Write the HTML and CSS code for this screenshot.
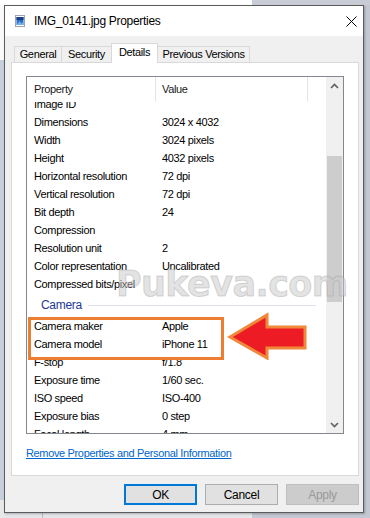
FILE: index.html
```html
<!DOCTYPE html>
<html>
<head>
<meta charset="utf-8">
<title>IMG_0141.jpg Properties</title>
<link rel="stylesheet" href="styles.css">
</head>
<body>
<div class="desktop">
  <div class="window">
    <div class="titlebar">
      <svg class="ticon" width="10" height="12" viewBox="0 0 10 12">
        <rect x="0.5" y="0.5" width="9" height="11" fill="#fff" stroke="#9aa4b4"/>
        <rect x="1.5" y="2" width="7" height="8" fill="#2b6cc4"/>
        <rect x="1.5" y="2" width="7" height="3" fill="#173f86"/>
        <path d="M1.5 10 L4.5 6 L6.5 8.5 L8.5 6.5 L8.5 10 Z" fill="#6fb0ec"/>
      </svg>
      <span class="title">IMG_0141.jpg Properties</span>
      <svg class="close" width="11" height="11" viewBox="0 0 11 11">
        <path d="M0.5 0.5 L10.5 10.5 M10.5 0.5 L0.5 10.5" stroke="#000" stroke-width="1" fill="none"/>
      </svg>
    </div>
    <div class="body">
      <div class="tabs">
        <div class="tab t-general">General</div>
        <div class="tab t-security">Security</div>
        <div class="tab t-details active">Details</div>
        <div class="tab t-prev">Previous Versions</div>
      </div>
      <div class="panel">
        <div class="list">
          <div class="list-main">
            <div class="header">
              <div class="hcell c1">Property</div>
              <div class="hcell c2">Value</div>
              <div class="hcell c3"></div>
            </div>
            <div class="viewport">
              <div class="rows">
                <div class="row"><span class="k">Image ID</span><span class="v"></span></div>
                <div class="row"><span class="k">Dimensions</span><span class="v">3024 x 4032</span></div>
                <div class="row"><span class="k">Width</span><span class="v">3024 pixels</span></div>
                <div class="row"><span class="k">Height</span><span class="v">4032 pixels</span></div>
                <div class="row"><span class="k">Horizontal resolution</span><span class="v">72 dpi</span></div>
                <div class="row"><span class="k">Vertical resolution</span><span class="v">72 dpi</span></div>
                <div class="row"><span class="k">Bit depth</span><span class="v">24</span></div>
                <div class="row"><span class="k">Compression</span><span class="v"></span></div>
                <div class="row"><span class="k">Resolution unit</span><span class="v">2</span></div>
                <div class="row"><span class="k">Color representation</span><span class="v">Uncalibrated</span></div>
                <div class="row"><span class="k">Compressed bits/pixel</span><span class="v"></span></div>
                <div class="group"><span class="gname">Camera</span><span class="gline"></span></div>
                <div class="hl">
                  <div class="row"><span class="k">Camera maker</span><span class="v">Apple</span></div>
                  <div class="row"><span class="k">Camera model</span><span class="v">iPhone 11</span></div>
                </div>
                <div class="row"><span class="k">F-stop</span><span class="v">f/1.8</span></div>
                <div class="row"><span class="k">Exposure time</span><span class="v">1/60 sec.</span></div>
                <div class="row"><span class="k">ISO speed</span><span class="v">ISO-400</span></div>
                <div class="row"><span class="k">Exposure bias</span><span class="v">0 step</span></div>
                <div class="row"><span class="k">Focal length</span><span class="v">4 mm</span></div>
              </div>
            </div>
          </div>
          <div class="scrollbar">
            <div class="sbtn">
              <svg width="9" height="6" viewBox="0 0 9 6"><polyline points="1,5 4.5,1.5 8,5" fill="none" stroke="#606060" stroke-width="1.6"/></svg>
            </div>
            <div class="track"><div class="thumb"></div></div>
            <div class="sbtn">
              <svg width="9" height="6" viewBox="0 0 9 6"><polyline points="1,1 4.5,4.5 8,1" fill="none" stroke="#606060" stroke-width="1.6"/></svg>
            </div>
          </div>
        </div>
        <a class="link" href="#">Remove Properties and Personal Information</a>
        <div class="watermark">Pukeva.com</div>
        <svg class="arrow" width="84" height="48" viewBox="0 0 84 48">
          <polygon points="4,25 41,3 41,15 79,15 79,36 41,36 41,46" fill="#ed1c24" stroke="#f0883a" stroke-width="3" stroke-linejoin="miter"/>
        </svg>
      </div>
      <div class="buttons">
        <button class="btn ok">OK</button>
        <button class="btn">Cancel</button>
        <button class="btn disabled">Apply</button>
      </div>
    </div>
  </div>
</div>
</body>
</html>
```
FILE: styles.css
```css
* { box-sizing: border-box; margin: 0; padding: 0; }
html, body { width: 370px; height: 518px; overflow: hidden; }
body {
  font-family: "Liberation Sans", Arial, sans-serif;
  font-size: 11px;
  letter-spacing: -0.35px;
  color: #000;
  background: #e4e6ea;
}
.desktop {
  width: 370px;
  height: 518px;
  padding: 5px 6px 5px 4px;
  background:
    linear-gradient(to right, transparent 0 42px, #b9bcc2 42px 43px, transparent 43px) 0 513px / 370px 5px no-repeat,
    linear-gradient(to bottom, #ffffff 0 5px, transparent 5px) 0 0 / 252px 518px no-repeat,
    linear-gradient(to bottom, #c8ccd5 0 5px, #c3c8d2 5px) 252px 0 / 118px 518px no-repeat,
    linear-gradient(to bottom, #fafafa 0 60px, #c7cfdc 60px 500px, #e8e8e8 500px) 0 0 / 4px 518px no-repeat,
    #e4e6ea;
}
.window {
  height: 508px;
  border: 1px solid #5c5c5c;
  background: #f0f0f0;
  display: flex;
  flex-direction: column;
  box-shadow: 1px 1px 2px rgba(0,0,0,0.25);
}
.titlebar {
  height: 30px;
  flex: 0 0 30px;
  background: #fff;
  display: flex;
  align-items: center;
  padding-left: 10px;
}
.ticon { flex: 0 0 auto; }
.title {
  margin-left: 9px;
  font-size: 12px;
  letter-spacing: -0.3px;
  color: #000;
}
.close { margin-left: auto; margin-right: 6px; }
.body {
  flex: 1;
  display: flex;
  flex-direction: column;
  padding: 7px 4px 0 6px;
}
.tabs {
  display: flex;
  align-items: flex-end;
  height: 19px;
  padding-left: 3px;
}
.tab {
  height: 16px;
  border: 1px solid #d9d9d9;
  border-bottom: none;
  background: #f0f0f0;
  text-align: center;
  line-height: 15px;
  font-size: 11px;
  margin-right: -1px;
}
.t-general { width: 48px; }
.t-security { width: 51px; }
.t-details { width: 47px; }
.t-prev { width: 93px; }
.tab.active {
  height: 20px;
  margin-bottom: -1px;
  background: #fff;
  position: relative;
  z-index: 1;
  line-height: 16px;
}
.panel {
  position: relative;
  height: 414px;
  flex: 0 0 414px;
  border: 1px solid #d9d9d9;
  background: #fff;
  padding: 13px 14px 0 14px;
}
.list {
  height: 358px;
  border: 1px solid #828790;
  display: flex;
  background: #fff;
}
.list-main {
  flex: 1;
  display: flex;
  flex-direction: column;
  min-width: 0;
}
.header {
  height: 25px;
  flex: 0 0 25px;
  display: flex;
  background: #fff;
}
.hcell {
  line-height: 25px;
  color: #1a1a1a;
  border-right: 1px solid #e5e5e5;
}
.hcell.c1 { width: 129px; padding-left: 7px; }
.hcell.c2 { width: 152px; padding-left: 6px; }
.hcell.c3 { flex: 1; border-right: none; }
.viewport {
  flex: 1;
  overflow: hidden;
}
.rows { margin-top: -7px; }
.row {
  height: 18px;
  display: flex;
  align-items: center;
  white-space: nowrap;
}
.row .k { width: 128px; padding-left: 7px; flex: 0 0 128px; }
.row .v { padding-left: 7px; }
.group {
  height: 24px;
  display: flex;
  align-items: center;
  padding-left: 14px;
  padding-right: 10px;
}
.gname {
  font-size: 12px;
  color: #1e3a94;
  letter-spacing: -0.3px;
}
.gline {
  flex: 1;
  height: 1px;
  background: #dfe4ec;
  margin-left: 6px;
}
.hl { position: relative; }
.hl::after {
  content: "";
  position: absolute;
  left: 1px;
  top: 0;
  width: 190px;
  height: 37px;
  border: 3px solid #ed7d31;
}
.scrollbar {
  width: 17px;
  flex: 0 0 17px;
  background: #f0f0f0;
  display: flex;
  flex-direction: column;
}
.sbtn {
  height: 17px;
  flex: 0 0 17px;
  display: flex;
  align-items: center;
  justify-content: center;
}
.track { flex: 1; padding: 62px 1px 0 1px; }
.thumb { height: 146px; background: #cdcdcd; }
.link {
  display: block;
  margin-top: 12px;
  color: #0066cc;
  text-decoration: underline;
  line-height: 14px;
  width: max-content;
}
.watermark {
  position: absolute;
  left: 104px;
  top: 201px;
  font-family: "DejaVu Sans", sans-serif;
  font-size: 35px;
  font-weight: 900;
  letter-spacing: -0.6px;
  color: rgba(200,200,200,0.5);
  -webkit-text-stroke: 1px rgba(150,150,150,0.35);
  line-height: 40px;
  white-space: nowrap;
  pointer-events: none;
}
.arrow {
  position: absolute;
  left: 214px;
  top: 249px;
}
.buttons {
  display: flex;
  justify-content: flex-end;
  gap: 8px;
  margin-top: 8px;
}
.btn {
  width: 73px;
  height: 21px;
  font-family: "Liberation Sans", Arial, sans-serif;
  font-size: 12px;
  letter-spacing: -0.3px;
  background: #e1e1e1;
  border: 1px solid #adadad;
  color: #000;
}
.btn.ok { border: 2px solid #0078d7; }
.btn.disabled { background: #cccccc; border-color: #bfbfbf; color: #9a9a9a; }
```
